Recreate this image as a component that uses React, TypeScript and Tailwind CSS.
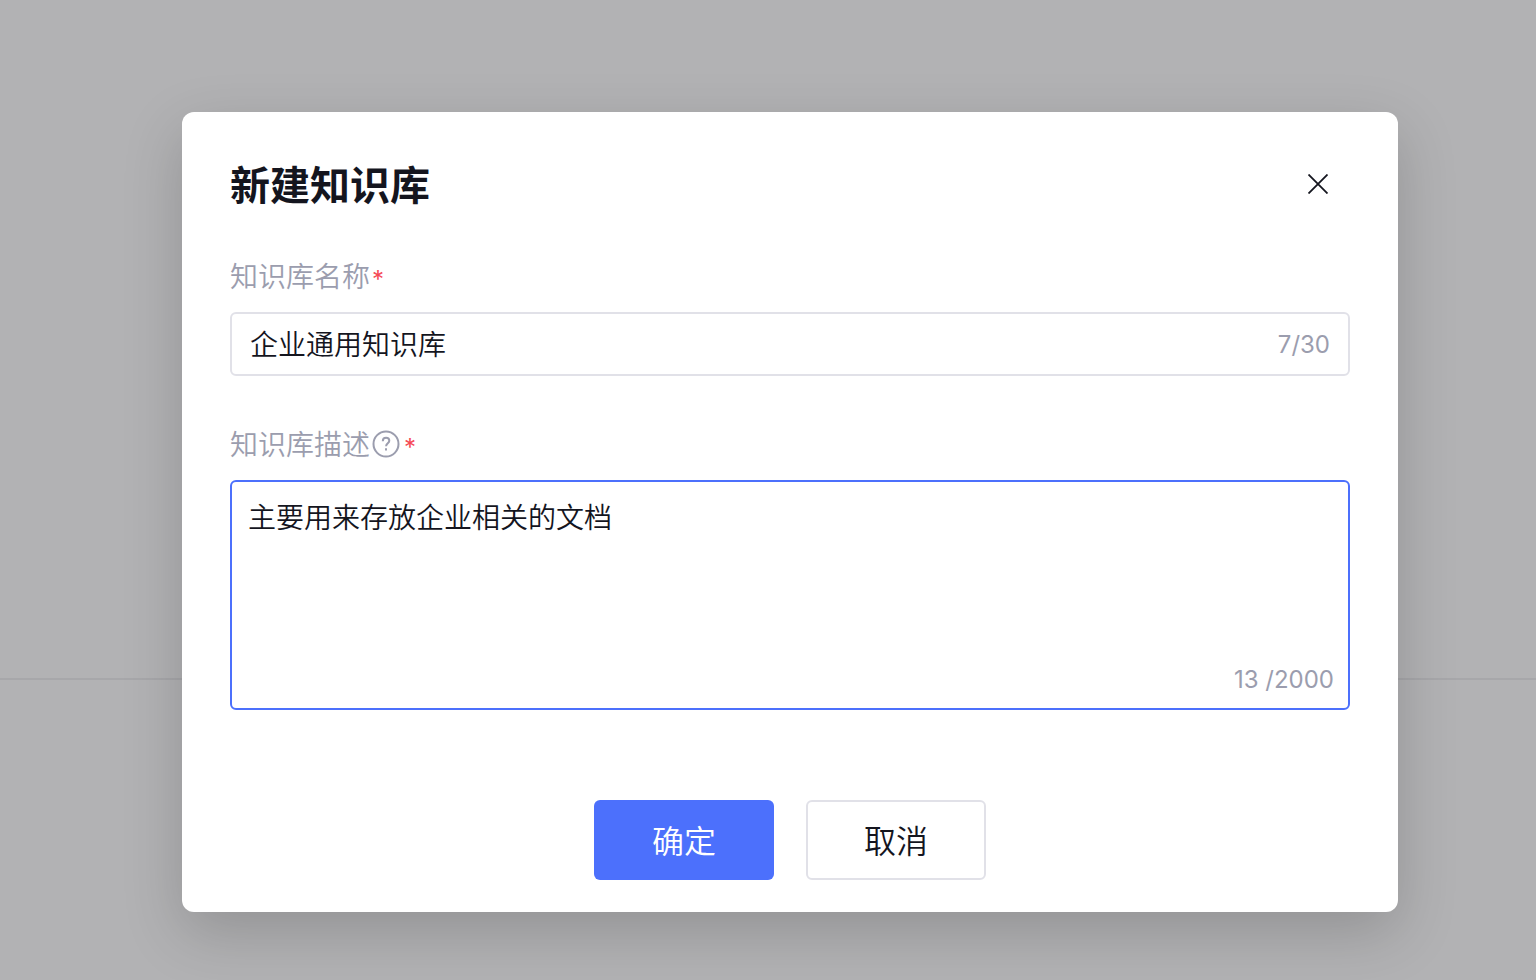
import React, { useState } from "react";

interface FieldLabelProps {
  htmlFor: string;
  text: string;
  children?: React.ReactNode;
}

const FieldLabel: React.FC<FieldLabelProps> = ({ htmlFor, text, children }) => (
  <label htmlFor={htmlFor} className="flex h-10 items-center text-[28px] leading-10 text-[#9b9dae]">
    <span className="pt-0.5">{text}</span>
    {children}
    <span className="ml-0.5 pt-2 text-2xl leading-8 font-normal text-[#f54a56]">*</span>
  </label>
);

const HelpIcon: React.FC = () => (
  <svg className="mx-0.5 h-7 w-7" viewBox="0 0 28 28" fill="none" stroke="currentColor" strokeWidth="2">
    <circle cx="14" cy="14" r="12.5" />
    <path d="M10.8 11.2c0-2 1.4-3.4 3.3-3.4s3.2 1.3 3.2 3c0 2.4-3.2 2.7-3.2 5.4" />
    <path d="M14 18.2v2.2" />
  </svg>
);

const CloseIcon: React.FC = () => (
  <svg className="h-5 w-5" viewBox="0 0 20 20" fill="none" stroke="currentColor" strokeWidth="1.8">
    <path d="M0.5 0.5l19 19M19.5 0.5l-19 19" />
  </svg>
);

const CreateKnowledgeBaseDialog: React.FC = () => {
  const [name, setName] = useState("企业通用知识库");
  const [description, setDescription] = useState("主要用来存放企业相关的文档");

  return (
    <div
      role="dialog"
      aria-labelledby="dialog-title"
      className="w-full max-w-[1216px] rounded-xl bg-white px-12 pt-12 pb-8 shadow-[0_20px_60px_rgba(0,0,0,0.18)]"
    >
      <div className="flex h-12 items-center justify-between">
        <h2 id="dialog-title" className="pt-1 text-[40px] leading-12 font-bold">
          新建知识库
        </h2>
        <button type="button" aria-label="关闭" className="mr-3 flex h-10 w-10 items-center justify-center">
          <CloseIcon />
        </button>
      </div>

      <form className="mt-12" onSubmit={(e) => e.preventDefault()}>
        <FieldLabel htmlFor="kb-name" text="知识库名称" />
        <div className="mt-4 flex h-16 items-center rounded-md border-2 border-[#e1e1e8] px-[18px]">
          <input
            id="kb-name"
            type="text"
            maxLength={30}
            value={name}
            onChange={(e) => setName(e.target.value)}
            className="min-w-0 flex-1 pt-0.5 text-[28px] leading-10 outline-none"
          />
          <span className="pt-0.5 text-2xl font-normal text-[#9b9dae]">{name.length}/30</span>
        </div>

        <div className="mt-12">
          <FieldLabel htmlFor="kb-description" text="知识库描述">
            <HelpIcon />
          </FieldLabel>
        </div>
        <div className="relative mt-4">
          <textarea
            id="kb-description"
            maxLength={2000}
            value={description}
            onChange={(e) => setDescription(e.target.value)}
            className="block h-[230px] w-full resize-none rounded-md border-2 border-[#4c70fc] px-4 py-4 text-[28px] leading-10 outline-none"
          />
          <span className="absolute right-4 bottom-3.5 text-2xl font-normal text-[#9b9dae]">
            {description.length} /2000
          </span>
        </div>

        <div className="mt-[90px] flex justify-center gap-8">
          <button type="submit" className="h-20 w-[180px] rounded-md bg-[#4c70fc] pt-1 text-[32px] text-white">
            确定
          </button>
          <button type="button" className="h-20 w-[180px] rounded-md border-2 border-[#e1e1e8] pt-1 text-[32px]">
            取消
          </button>
        </div>
      </form>
    </div>
  );
};

export default function App() {
  return (
    <div className="grid min-h-screen bg-[#b2b2b4] font-['Inter','Noto_Sans_CJK_SC',sans-serif] font-[350] text-[#14151e]">
      {/* dimmed page behind the dialog */}
      <div className="col-start-1 row-start-1">
        <div className="h-[680px] border-b-2 border-[#a7a7aa]" />
      </div>
      <main className="z-10 col-start-1 row-start-1 flex items-start justify-center pt-28 pb-16 pl-11">
        <CreateKnowledgeBaseDialog />
      </main>
    </div>
  );
}
